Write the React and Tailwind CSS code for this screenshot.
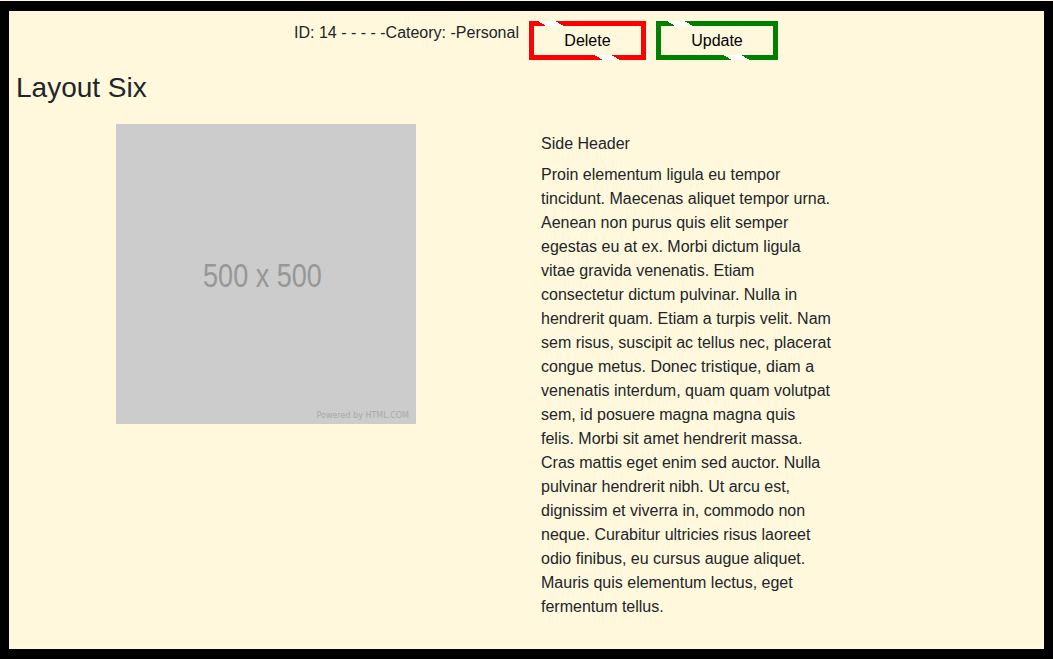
export default function App() {
  const para =
    "Proin elementum ligula eu tempor tincidunt. Maecenas aliquet tempor urna. Aenean non purus quis elit semper egestas eu at ex. Morbi dictum ligula vitae gravida venenatis. Etiam consectetur dictum pulvinar. Nulla in hendrerit quam. Etiam a turpis velit. Nam sem risus, suscipit ac tellus nec, placerat congue metus. Donec tristique, diam a venenatis interdum, quam quam volutpat sem, id posuere magna magna quis felis. Morbi sit amet hendrerit massa. Cras mattis eget enim sed auctor. Nulla pulvinar hendrerit nibh. Ut arcu est, dignissim et viverra in, commodo non neque. Curabitur ultricies risus laoreet odio finibus, eu cursus augue aliquet. Mauris quis elementum lectus, eget fermentum tellus.";
  return (
    <div className="h-[659px] w-[1053px] bg-[#fff8dc] pt-px font-['Liberation_Sans',Arial,sans-serif] text-[#212529]">
      <div className="box-border h-[658px] border-solid border-black border-t-[10px] border-b-[10px] border-x-[9px] bg-[#fff8dc] pt-[10px]">
        <div className="flex items-start justify-center gap-[10px] pl-[19px]">
          <div className="text-[16px] leading-[18px] pt-[3px]">ID: 14 - - - - -Cateory: -Personal</div>
          <button className="box-border h-[39px] w-[117px] border-[5px] border-solid bg-transparent text-[16px] leading-[18px] text-black pt-px [border-image:linear-gradient(31deg,#ff0000_40.5%,#ffffff_40.5%,#ffffff_50%,#ff0000_50%)_5]">
            Delete
          </button>
          <button className="box-border h-[39px] w-[122px] border-[5px] border-solid bg-transparent text-[16px] leading-[18px] text-black pt-px [border-image:linear-gradient(31deg,#008000_40.5%,#ffffff_40.5%,#ffffff_50%,#008000_50%)_5]">
            Update
          </button>
        </div>
        <h1 className="mt-[11px] pl-[7px] text-[28px] leading-[34px] font-normal">Layout Six</h1>
        <div className="mt-[19px] flex pl-[7px]">
          <div className="flex w-[500px] justify-center">
            <div className="relative flex h-[300px] w-[300px] items-center justify-center bg-[#cccccc]">
              <span className="-ml-[8px] mt-[2px] scale-x-[0.82] text-[33px] leading-none text-[#979797]">
                500 x 500
              </span>
              <span className="absolute bottom-[4px] right-[7px] font-['DejaVu_Sans',sans-serif] text-[8px] leading-none text-[#a8a8a8]">
                Powered by HTML.COM
              </span>
            </div>
          </div>
          <div className="ml-[25px] w-[291px] pt-[8px] text-[16px] leading-6">
            <div className="mb-[7px]">Side Header</div>
            <p>{para}</p>
          </div>
        </div>
      </div>
    </div>
  );
}
